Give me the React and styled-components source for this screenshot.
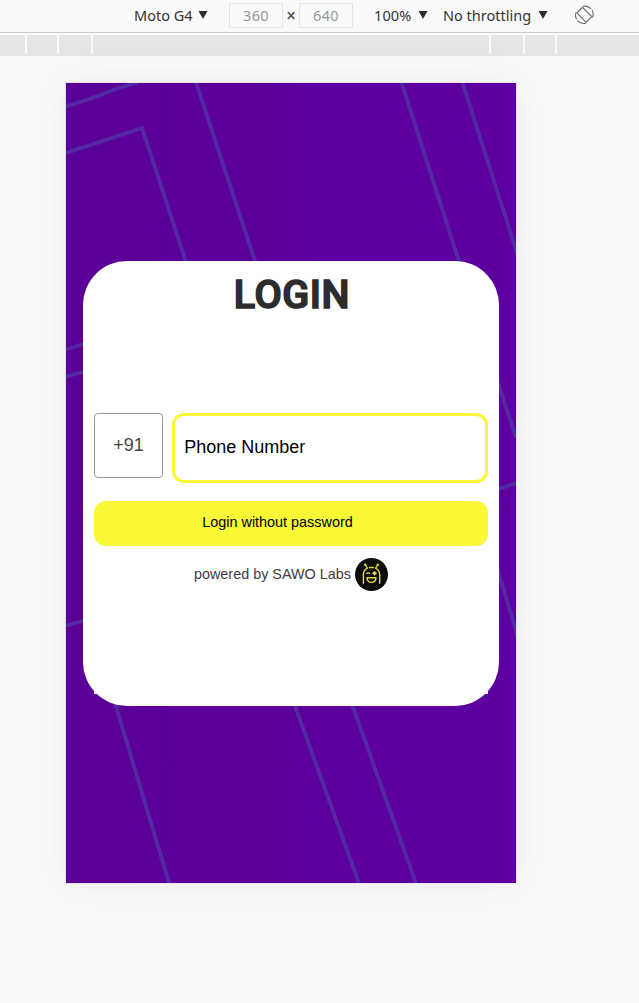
import React from "react";
import styled, { createGlobalStyle } from "styled-components";

const Global = createGlobalStyle`
  * { box-sizing: border-box; }
  body { margin: 0; background: #fafafa; font-family: "Liberation Sans", Arial, sans-serif; }
`;
const Page = styled.div`
  height: 1003px;
  overflow: hidden;
  background: #fafafa;
`;
const Toolbar = styled.header`
  display: flex;
  align-items: center;
  height: 33px;
  padding: 0 0 2px 134px;
  border-bottom: 1px solid #cbcbcb;
  font-family: "Noto Sans", sans-serif;
  font-size: 14.5px;
  color: #333;
`;
const Picker = styled.div`
  display: flex;
  align-items: center;
  justify-content: space-between;
  width: ${(p) => p.$width}px;
  margin-right: ${(p) => p.$gap}px;
  white-space: nowrap;
  letter-spacing: ${(p) => p.$spacing || 0}px;
`;
const ZoomPicker = styled(Picker)`
  margin-left: 21px;
`;
const Size = styled.div`
  width: 54px;
  height: 25px;
  border: 1px solid #e6e6e6;
  color: #999;
  text-align: center;
  line-height: 23px;
  letter-spacing: 0.3px;
`;
const Times = styled.span`
  width: 16px;
  text-align: center;
  font-size: 17px;
  font-weight: 600;
  color: #555;
`;
const Ruler = styled.div`
  display: flex;
  gap: 2px;
  height: 21px;
  margin-top: 2px;
  background: linear-gradient(#fafafa 19px, #e5e5e5 19px);
`;
const Range = styled.div`
  width: ${(p) => p.$width}px;
  height: 19px;
  background: #e5e5e5;
`;
const Screen = styled.main`
  display: grid;
  width: 450px;
  height: 800px;
  margin: 27px 0 0 66px;
  background: linear-gradient(90deg, #5a0098, #5e00a1);
  box-shadow: 0 0 0 1px #e6e2ec, 0 0 34px rgba(0, 0, 0, 0.075);
  > * { grid-area: 1 / 1; }
`;
const Card = styled.section`
  width: 416px;
  height: 445px;
  margin: 178px 0 0 17px;
  padding: 0 11px 12px;
  background: #fff;
  border-radius: 44px;
  z-index: 1;
  display: flex;
  flex-direction: column;
`;
const Title = styled.h1`
  margin: 9px 0 0;
  height: 50px;
  padding-left: 2px;
  font: 500 39.5px/50px Roboto, sans-serif;
  letter-spacing: 0.6px;
  text-align: center;
  color: #2c2c2c;
  -webkit-text-stroke: 1.6px #2c2c2c;
  stroke-linejoin: round;
`;
const Form = styled.form`
  flex: 1;
  margin-top: 93px;
  background: #fff;
`;
const Row = styled.div`
  display: flex;
  align-items: flex-start;
  gap: 9px;
`;
const Code = styled.div`
  width: 69px;
  height: 65px;
  border: 1px solid #999;
  border-radius: 4px;
  text-align: center;
  font-size: 18px;
  line-height: 63px;
  color: #444;
`;
const Phone = styled.div`
  flex: 1;
  height: 70px;
  padding-left: 9.3px;
  border: 3px solid #f8f837;
  border-radius: 12px;
  font-size: 18px;
  line-height: 63px;
  color: #000;
`;
const Submit = styled.button`
  display: block;
  width: 100%;
  height: 45px;
  margin-top: 18px;
  padding: 0 27px 3px 0;
  border: 0;
  border-radius: 12px;
  background: #f8f837;
  color: #000;
  font: 14.4px "Liberation Sans", sans-serif;
`;
const Powered = styled.div`
  display: flex;
  justify-content: center;
  align-items: center;
  gap: 4px;
  margin-top: 12px;
  height: 33px;
  font-size: 14.4px;
  color: #3c3c44;
`;
const PoweredText = styled.span`
  padding-bottom: 2px;
`;
const Arrow = styled.svg`
  flex: none;
`;

const Triangle = () => (
  <Arrow width="10" height="10" viewBox="0 0 10 10">
    <path d="M.5 1h9L5 9z" fill="#2f2f2f" />
  </Arrow>
);

const Rotate = () => (
  <svg width="20" height="20" viewBox="0 0 20 20" fill="none" stroke="#6b6b6b" strokeWidth="1.1">
    <rect x="5.3" y="3.2" width="8" height="13.2" rx="1" transform="rotate(-45 9.3 9.8)" />
    <path d="M7.5 1.5A8.4 8.4 0 0 1 16.200 4M17.100 5.300A8.400 8.400 0 0 1 17.500 12.500M11.200 18.100A8.400 8.400 0 0 1 2.500 15.600M1.600 14.300A8.400 8.400 0 0 1 1.200 7.100" />
  </svg>
);

const Pattern = () => (
  <svg width="450" height="800" viewBox="0 0 450 800" fill="none" stroke="#542aa4" strokeWidth="3.8">
    <path d="M-2 24.2 20 17.2 50 6 72-1M-2 70.7 76 45 121 182M129.5-2 190 181M335-2 450 355M396-2 452 173M-2 267 19 260.5M-2 294 19 288.5M431 406.5 452 399.5M431 484 452 555M-2 543.5 19 537M49 620 104 803M228 620 294 803M285.5 620 351 803" />
  </svg>
);

const Mascot = () => (
  <svg width="33" height="33" viewBox="0 0 33 33" fill="none" stroke="#dedb2e" strokeWidth="1.4" strokeLinecap="round" strokeLinejoin="round">
    <circle cx="16.500" cy="16.500" r="16.500" fill="#0d0d0d" stroke="none" />
    <path d="M8.400 25.300V16.500Q8.600 12 12.500 10.200M14.500 9.500H18.500M20.500 10.200Q24.500 12 24.700 16.500V25.300M12.200 9.800 10.500 7M20.900 9.800 22.600 7" />
    <path d="M12 15.600Q13.300 14.200 14.700 15.600M12 19.700H21Q20.700 24.400 16.500 24.400T12 19.700z" />
    <circle cx="19.500" cy="15.300" r="1.800" fill="#dedb2e" stroke="none" />
    <path d="M19.500 13.400v3.800M17.600 15.300h3.800" strokeWidth=".8" />
    <circle cx="10.200" cy="6.800" r="1.200" fill="#dedb2e" stroke="none" />
    <circle cx="22.800" cy="6.800" r="1.200" fill="#dedb2e" stroke="none" />
  </svg>
);

const ranges = [25, 30, 32, 396, 32, 30, 82];

export default function App() {
  return (
    <Page>
      <Global />
      <Toolbar>
        <Picker $width={74} $gap={21}>Moto G4<Triangle /></Picker>
        <Size>360</Size>
        <Times>×</Times>
        <Size>640</Size>
        <ZoomPicker $width={54} $gap={15} $spacing={0.1}>100%<Triangle /></ZoomPicker>
        <Picker $width={105} $gap={27}>No throttling<Triangle /></Picker>
        <Rotate />
      </Toolbar>
      <Ruler>
        {ranges.map((width, i) => <Range key={i} $width={width} />)}
      </Ruler>
      <Screen>
        <Pattern />
        <Card>
          <Title>LOGIN</Title>
          <Form>
            <Row>
              <Code>+91</Code>
              <Phone>Phone Number</Phone>
            </Row>
            <Submit type="button">Login without password</Submit>
            <Powered><PoweredText>powered by SAWO Labs</PoweredText><Mascot /></Powered>
          </Form>
        </Card>
      </Screen>
    </Page>
  );
}
